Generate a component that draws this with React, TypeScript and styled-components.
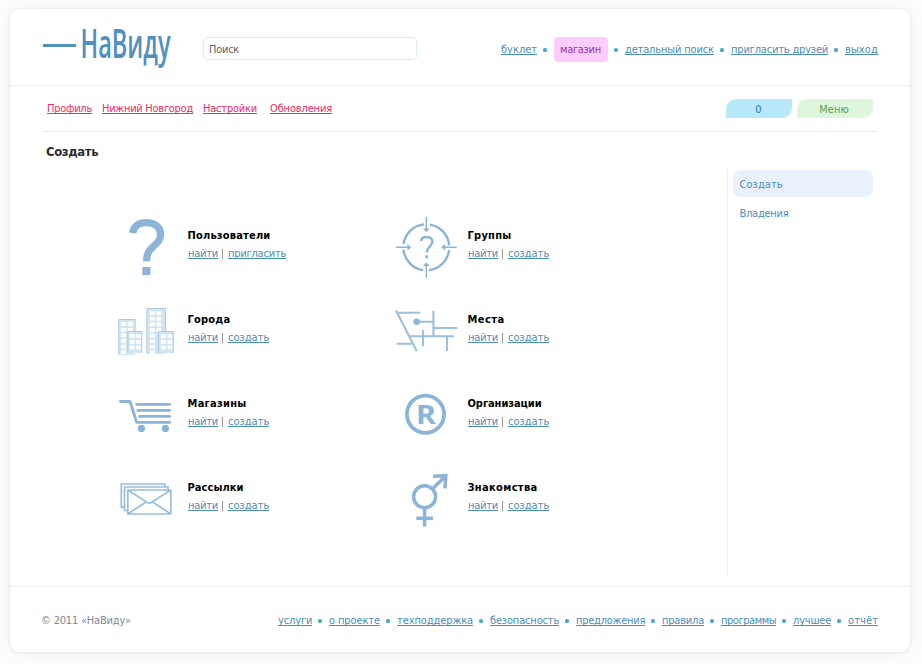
import React from 'react';
import styled, { createGlobalStyle, css } from 'styled-components';

const GlobalStyle = createGlobalStyle`
  * { box-sizing: border-box; }
  html, body { margin: 0; padding: 0; background: #fefefe; }
  body {
    height: 664px;
    overflow: hidden;
    font: 11px/14px "DejaVu Sans Condensed", "Noto Sans", sans-serif;
  }
`;

const Page = styled.div`
  width: 922px;
  height: 664px;
  padding: 9px 12px 12px 10px;
  overflow: hidden;
`;

const Card = styled.div`
  display: flex;
  flex-direction: column;
  width: 900px;
  height: 643px;
  border-radius: 9px;
  background: #fff;
  box-shadow: 0 0 2px rgba(0, 0, 0, 0.12), 0 2px 6px rgba(0, 0, 0, 0.03), 0 0 32px rgba(0, 0, 0, 0.06);
`;

const Header = styled.header`
  display: flex;
  align-items: flex-start;
  height: 77px;
  padding: 0 32px;
  border-bottom: 1px solid #ebf1fc;
`;

const Logo = styled.svg`
  display: block;
  flex: none;
  width: 145px;
  height: 60px;
  margin-top: 14px;
`;

const SearchBox = styled.input`
  width: 214px;
  height: 23px;
  margin: 28px 0 0 16px;
  padding: 1px 5px 0;
  border: 1px solid #ddecfb;
  border-radius: 4px;
  outline: none;
  background: #fff;
  color: #606060;
  font: inherit;
  letter-spacing: -0.25px;
  &::placeholder { color: #606060; opacity: 1; }
`;

const LinkRow = styled.nav`
  display: flex;
  align-items: flex-start;
  margin-left: auto;
`;

const TopLinks = styled(LinkRow)`
  margin-top: 34px;
`;

const Anchor = styled.a<{ $w: number; $ls?: number }>`
  display: block;
  flex: none;
  width: ${p => p.$w}px;
  letter-spacing: ${p => p.$ls ?? 0}px;
  white-space: nowrap;
  color: #4b8cba;
  height: 12px;
  border-bottom: 1px solid currentColor;
  line-height: 14px;
  text-decoration: none;
`;

const Dot = styled.span`
  flex: none;
  width: 4px;
  height: 4px;
  margin: 5px 7px 0 6px;
  border-radius: 1.5px;
  background: #4bacc6;
`;

const ShopPill = styled.a`
  display: block;
  width: 54px;
  height: 25px;
  margin-top: -6px;
  padding-left: 6px;
  border-radius: 4px;
  background: #fcf;
  color: #993399;
  line-height: 25px;
  letter-spacing: -0.3px;
  white-space: nowrap;
`;

const ProfileBar = styled.div`
  display: flex;
  margin: 0 32px;
  height: 46px;
  padding: 13px 5px 0;
  border-bottom: 1px solid #eee;
`;

const ProfileLink = styled(Anchor)<{ $gap: number }>`
  margin: 3px ${p => p.$gap}px 0 0;
  color: #ef2a68;
`;

const Tabs = styled.div`
  display: flex;
  gap: 5px;
  margin-left: auto;
`;

const Tab = styled.a<{ $tone: 'blue' | 'green' }>`
  height: 19px;
  border-radius: 10px 0 10px 0;
  line-height: 22px;
  text-align: center;
  ${p => p.$tone === 'blue'
    ? css`width: 66px; padding-right: 1px; background: #b8e9fb; color: #2277a8;`
    : css`width: 76px; padding-right: 2px; background: #ddf6dc; color: #5c9c57;`}
`;

const Title = styled.h1`
  margin: 12px 0 0 36px;
  height: 26px;
  color: #2b2b2b;
  font-size: 13px;
  line-height: 16px;
  font-weight: bold;
  letter-spacing: -0.4px;
`;

const Main = styled.main`
  display: flex;
  justify-content: space-between;
  height: 406px;
  padding: 0 37px 0 104px;
`;

const Catalog = styled.div`
  display: grid;
  grid-template-columns: 280px 280px;
  grid-auto-rows: 84px;
  padding-top: 45px;
`;

const Entry = styled.div`
  display: flex;
`;

const Icon = styled.svg`
  flex: none;
  width: 64px;
  height: 64px;
  margin-right: 10px;
  color: #8ab4d8;
`;

const EntryBody = styled.div`
  padding-top: 14px;
`;

const EntryName = styled.strong<{ $ls: number }>`
  display: block;
  height: 18px;
  margin-left: -0.5px;
  color: #000;
  white-space: nowrap;
  letter-spacing: ${p => p.$ls}px;
`;

const Actions = styled.div`
  display: flex;
`;

const Divider = styled.span`
  width: 1px;
  height: 10px;
  margin: 2px 5px 0 4px;
  background: #999;
`;

const Sidebar = styled.aside`
  width: 146px;
  padding-left: 5px;
  border-left: 1px solid #eee;
`;

const SideItem = styled.a<{ $active?: boolean; $ls: number }>`
  display: block;
  height: 27px;
  margin-bottom: 2px;
  padding-left: 6.5px;
  border-radius: 8px;
  background: ${p => (p.$active ? '#eaf0fc' : 'transparent')};
  color: #4b8cba;
  line-height: 30px;
  letter-spacing: ${p => p.$ls}px;
`;

const Footer = styled.footer`
  display: flex;
  align-items: flex-start;
  margin-top: 10px;
  height: 66px;
  padding: 27px 32px 0 31px;
  border-top: 1px solid #ebf1fc;
`;

const Copyright = styled.span`
  color: #85859b;
  letter-spacing: -0.2px;
`;

const stroke = { fill: 'none', stroke: 'currentColor' };

function Windows({ x, y, cols, rows }: { x: number; y: number; cols: number; rows: number }) {
  return (
    <g fill="#fff">
      {Array.from({ length: cols * rows }, (_, i) => (
        <rect key={i} x={x + (i % cols) * 6.6} y={y + Math.floor(i / cols) * 5.6} width="5" height="3.8" />
      ))}
    </g>
  );
}

const icons: Record<string, React.ReactNode> = {
  users: (
    <>
      <path {...stroke} strokeWidth="7.2" d="M18.7 18C19.6 10.8 25 7.6 32 7.6C41 7.6 46.6 12.4 46.6 19C46.6 31.5 32.5 30 32.5 46.2" />
      <path fill="currentColor" d="M28.4 52h8v8h-8z" />
    </>
  ),
  groups: (
    <>
      <circle {...stroke} strokeWidth="2.4" cx="32.3" cy="32.3" r="23" strokeDasharray="30.13 6" strokeDashoffset="-3" />
      <path {...stroke} strokeWidth="1.4" d="M32.3 1.7v13M32.3 62.7v-13M2 32.3h13M62.7 32.3h-13" />
      <path fill="currentColor" d="M29 13.5h6.6l-3.3 3.8zM29 51h6.6l-3.3-3.8zM13.5 29v6.6l3.8-3.3zM51 29v6.6l-3.8-3.3z" />
      <path {...stroke} strokeWidth="2.5" d="M27 26.2C27.2 23.5 29.5 22 32.7 22C36.3 22 38.4 24 38.4 26.6C38.4 31.8 32.7 31.5 32.7 37.6" />
      <path fill="currentColor" d="M31.3 40.3h2.9v3h-2.9z" />
    </>
  ),
  cities: (
    <g stroke="#abcae5" strokeWidth="1" fill="#d3e4f2">
      <path stroke="none" d="M5 21h15.8v35H5zM33 10h18.2v45H33zM14 33h13.7v21H14zM44.6 33h14.6v21H44.6z" />
      <g stroke="none">
        <Windows x={7} y={23.2} cols={2} rows={2} />
        <Windows x={7} y={34.4} cols={1} rows={4} />
        <Windows x={35.8} y={12.3} cols={2} rows={4} />
        <Windows x={35.8} y={34.7} cols={1} rows={4} />
        <Windows x={15.6} y={35.4} cols={2} rows={3} />
        <Windows x={46.9} y={35.4} cols={2} rows={3} />
      </g>
      <path fill="none" d="M4.8 56V20.5h16.4V32M32.8 55V9.5h18.7V32M13.8 54V32.5h14V54M44.5 54V32.5h14.8V54" />
    </g>
  ),
  places: (
    <g {...stroke} strokeWidth="2.1" stroke="#9cc0de">
      <path d="M2 11.5L22.7 52M3 13.7h23.3M25 22.8h14.3M39.4 11.7V37M39.4 29h24M16 37.2h44M29 31.3v16M53 37.2V52M2.7 44.7H19" />
      <circle fill="#8ab4d8" stroke="none" cx="22.7" cy="22.7" r="3.3" />
    </g>
  ),
  shops: (
    <>
      <path {...stroke} strokeWidth="2.9" strokeLinecap="round" strokeLinejoin="round" d="M6.5 18.5H16L22.7 39.4H55.6M22.7 21.4h32.9M23.8 27.4h31.8M25.5 33.4h30.1" />
      <circle fill="currentColor" cx="27.4" cy="45.4" r="3.6" />
      <circle fill="currentColor" cx="51.4" cy="45.4" r="3.6" />
    </>
  ),
  companies: (
    <>
      <circle {...stroke} strokeWidth="3.8" cx="31.5" cy="31.3" r="18.6" />
      <text x="22" y="41" fill="currentColor" fontFamily="Noto Sans, sans-serif" fontWeight="bold" fontSize="27.5" textLength="20" lengthAdjust="spacingAndGlyphs">R</text>
    </>
  ),
  mailings: (
    <g {...stroke} strokeWidth="1.7" stroke="#98bedd">
      <path d="M10.3 40.2H7.3V17h43.5v2.8M13.4 43.5h-2.9V20h43.5v3" />
      <path d="M13.8 23h43v24h-43zM13.8 23L32 34.6Q35.3 37.6 38.6 34.6L56.8 23M13.8 47L32 35M56.8 47L38.6 35" />
    </g>
  ),
  dating: (
    <g {...stroke} strokeWidth="3.5">
      <circle cx="30.6" cy="29.7" r="11" />
      <path d="M38.7 21.8L51.2 9.3M39 9.3l12.8-.6-.8 12.7M30.6 41v18.4M22.3 51.3H39" />
    </g>
  ),
};

type EntryData = { icon: string; name: string; ls: number; invite?: boolean };
const entries: EntryData[] = [
  { icon: 'users', name: 'Пользователи', ls: 0.19, invite: true },
  { icon: 'groups', name: 'Группы', ls: 0.25 },
  { icon: 'cities', name: 'Города', ls: 0.22 },
  { icon: 'places', name: 'Места', ls: 0.44 },
  { icon: 'shops', name: 'Магазины', ls: 0.28 },
  { icon: 'companies', name: 'Организации', ls: -0.06 },
  { icon: 'mailings', name: 'Рассылки', ls: 0.06 },
  { icon: 'dating', name: 'Знакомства', ls: 0.33 },
];

const footerLinks: [string, number, number][] = [
  ['услуги', 34, -0.15],
  ['о проекте', 51, -0.1],
  ['техподдержка', 76, -0.1],
  ['безопасность', 69, -0.16],
  ['предложения', 69, -0.26],
  ['правила', 42, -0.21],
  ['программы', 55, -0.45],
  ['лучшее', 38, -0.2],
  ['отчёт', 30, 0.1],
];

export default function App() {
  return (
    <>
      <GlobalStyle />
      <Page>
        <Card>
          <Header>
            <Logo viewBox="0 0 145 60" aria-label="НаВиду">
              <path d="M1 21h33v3H1z" fill="#5090be" />
              <text x="38.5" y="35" fill="#5090be" fontFamily="Open Sans, sans-serif" fontWeight="600" fontSize="39" textLength="90" lengthAdjust="spacingAndGlyphs">НаВиду</text>
            </Logo>
            <SearchBox placeholder="Поиск" />
            <TopLinks>
              <Anchor $w={36}>буклет</Anchor>
              <Dot />
              <ShopPill>магазин</ShopPill>
              <Dot />
              <Anchor $w={89} $ls={-0.16}>детальный поиск</Anchor>
              <Dot />
              <Anchor $w={97} $ls={-0.18}>пригласить друзей</Anchor>
              <Dot />
              <Anchor $w={33} $ls={0.1}>выход</Anchor>
            </TopLinks>
          </Header>

          <ProfileBar>
            <ProfileLink $w={45} $ls={-0.26} $gap={10}>Профиль</ProfileLink>
            <ProfileLink $w={91} $ls={-0.27} $gap={10}>Нижний Новгород</ProfileLink>
            <ProfileLink $w={54} $ls={-0.2} $gap={13}>Настройки</ProfileLink>
            <ProfileLink $w={62} $ls={-0.15} $gap={0}>Обновления</ProfileLink>
            <Tabs>
              <Tab $tone="blue">0</Tab>
              <Tab $tone="green">Меню</Tab>
            </Tabs>
          </ProfileBar>

          <Title>Создать</Title>

          <Main>
            <Catalog>
              {entries.map(e => (
                <Entry key={e.name}>
                  <Icon viewBox="0 0 64 64">{icons[e.icon]}</Icon>
                  <EntryBody>
                    <EntryName $ls={e.ls}>{e.name}</EntryName>
                    <Actions>
                      <Anchor $w={30} $ls={-0.22}>найти</Anchor>
                      <Divider />
                      {e.invite
                        ? <Anchor $w={58} $ls={-0.22}>пригласить</Anchor>
                        : <Anchor $w={41}>создать</Anchor>}
                    </Actions>
                  </EntryBody>
                </Entry>
              ))}
            </Catalog>
            <Sidebar>
              <SideItem $active $ls={0.05}>Создать</SideItem>
              <SideItem $ls={-0.25}>Владения</SideItem>
            </Sidebar>
          </Main>

          <Footer>
            <Copyright>© 2011 «НаВиду»</Copyright>
            <LinkRow>
              {footerLinks.map(([label, w, ls], i) => (
                <React.Fragment key={label}>
                  {i > 0 && <Dot />}
                  <Anchor $w={w} $ls={ls}>{label}</Anchor>
                </React.Fragment>
              ))}
            </LinkRow>
          </Footer>
        </Card>
      </Page>
    </>
  );
}
